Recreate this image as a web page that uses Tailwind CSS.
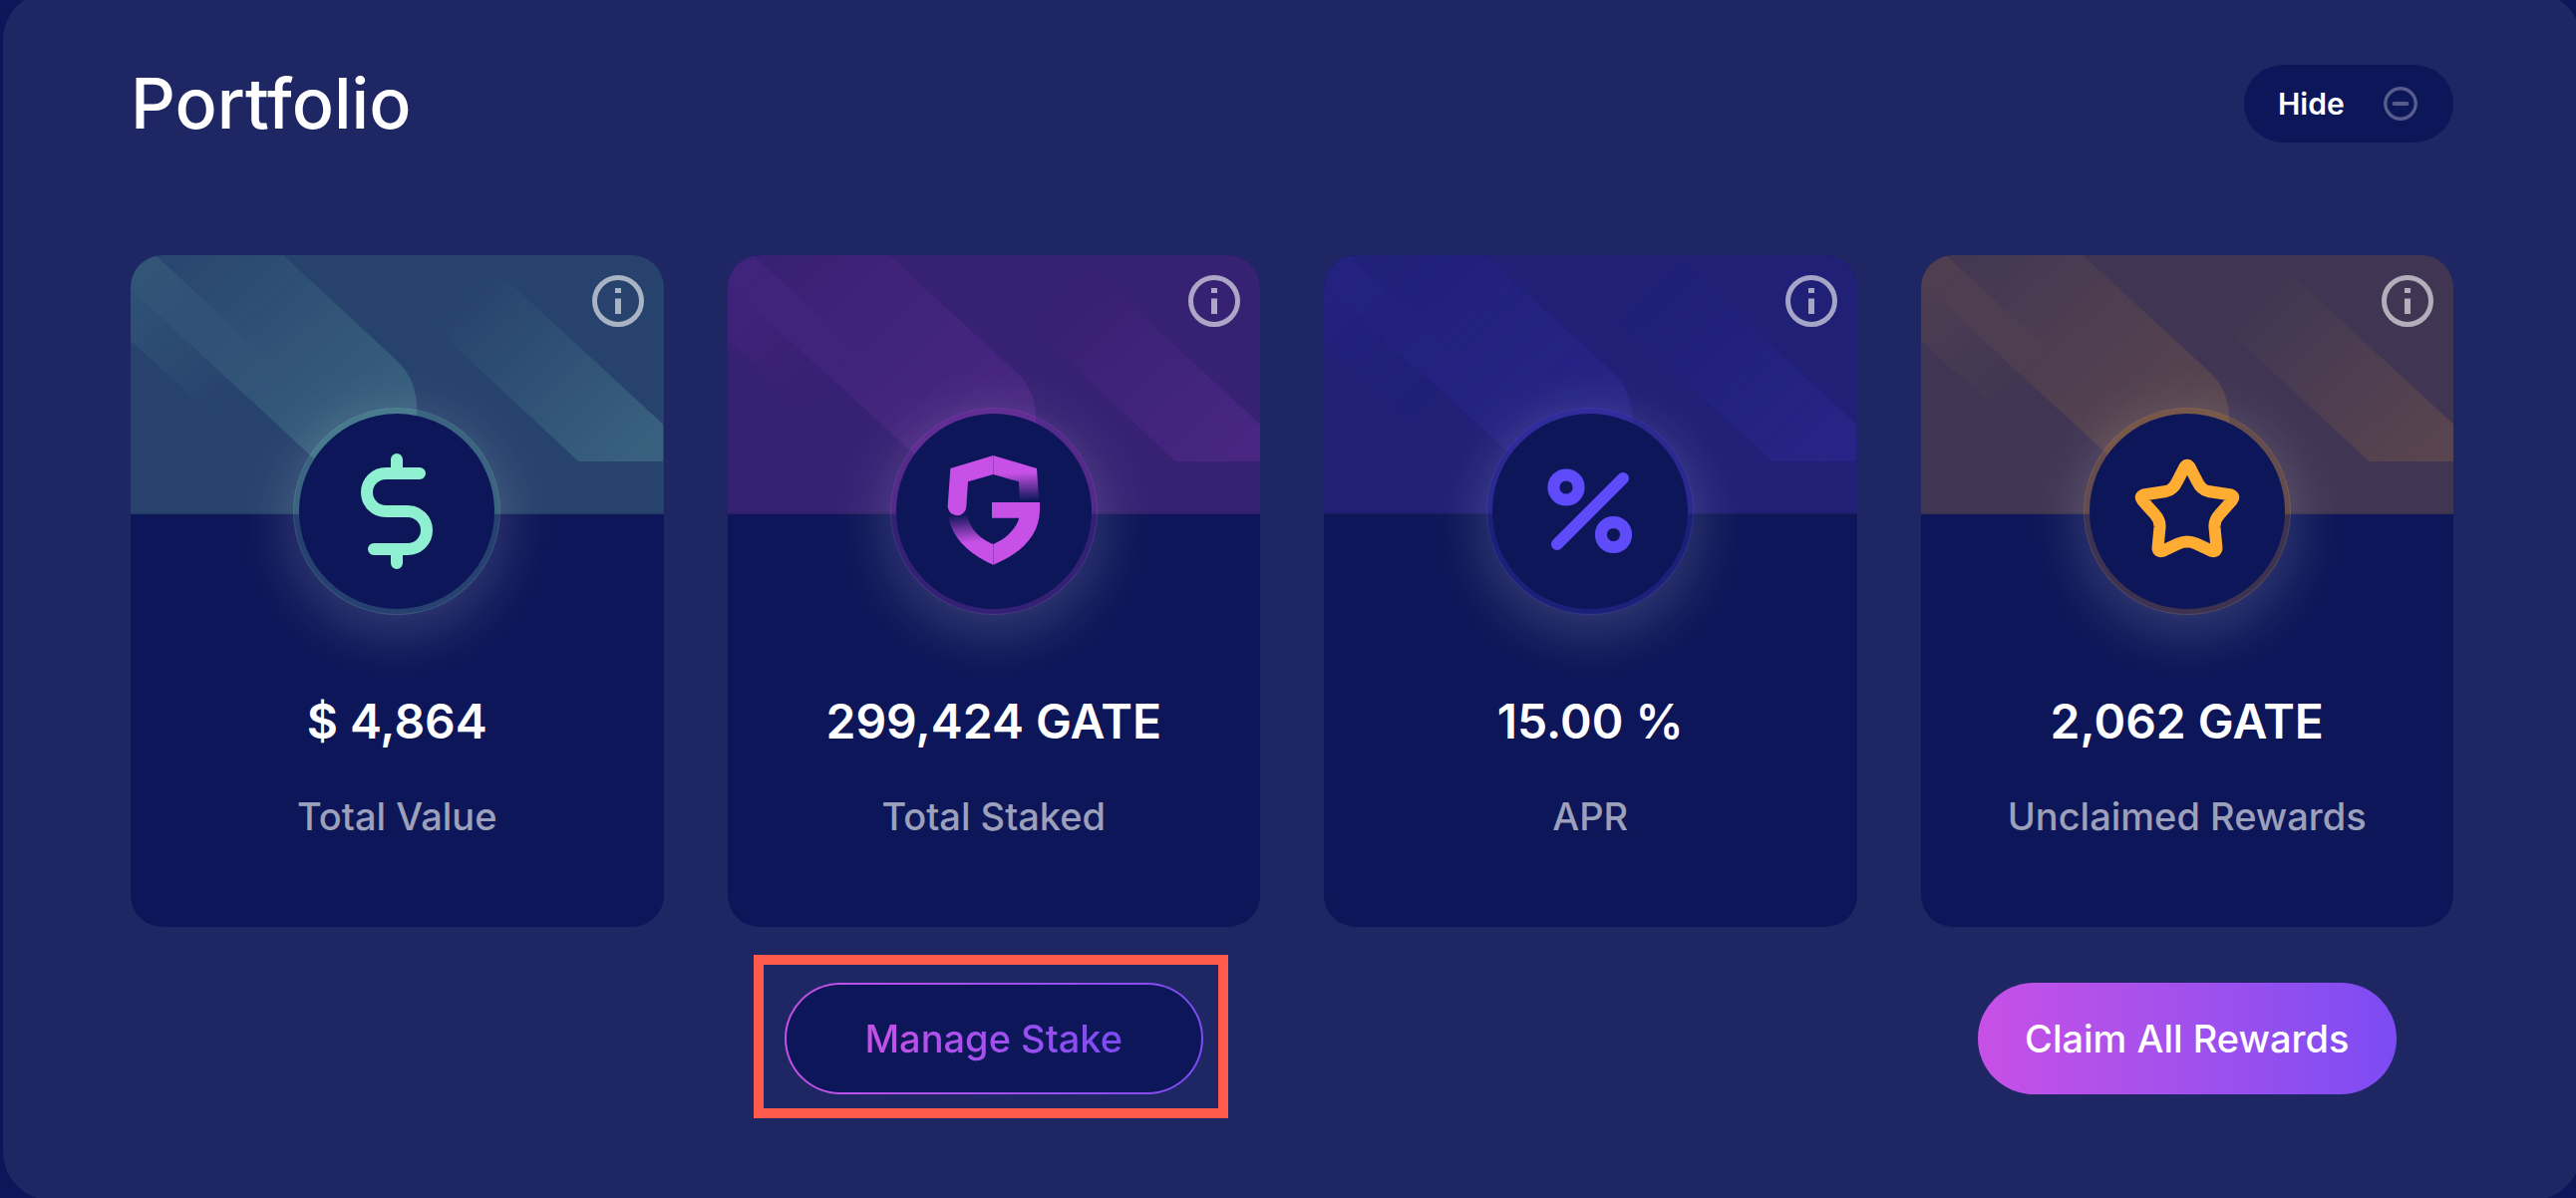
<!DOCTYPE html>
<html lang="en">
<head>
<meta charset="utf-8">
<meta name="viewport" content="width=device-width, initial-scale=1">
<title>Portfolio</title>
<script src="https://cdn.jsdelivr.net/npm/@tailwindcss/browser@4"></script>
</head>
<body class="bg-[#0d1658] font-['Inter','Noto_Sans',sans-serif] text-white">

<!-- Shared card artwork -->
<svg class="absolute size-0" aria-hidden="true">
  <defs>
    <linearGradient id="fadeWide" gradientUnits="userSpaceOnUse" x1="60" y1="-40" x2="270" y2="190">
      <stop offset="0" stop-color="#fff" stop-opacity=".1"/>
      <stop offset="1" stop-color="#fff"/>
    </linearGradient>
    <linearGradient id="fadeCorner" gradientUnits="userSpaceOnUse" x1="0" y1="20" x2="120" y2="145">
      <stop offset="0" stop-color="#fff" stop-opacity=".55"/>
      <stop offset="1" stop-color="#fff" stop-opacity="0"/>
    </linearGradient>
    <linearGradient id="fadeRight" gradientUnits="userSpaceOnUse" x1="325" y1="30" x2="500" y2="215">
      <stop offset="0" stop-color="#fff" stop-opacity="0"/>
      <stop offset="1" stop-color="#fff"/>
    </linearGradient>
    <mask id="maskWide" maskUnits="userSpaceOnUse" x="0" y="0" width="534" height="258"><rect width="534" height="258" fill="url(#fadeWide)"/></mask>
    <mask id="maskCorner" maskUnits="userSpaceOnUse" x="0" y="0" width="534" height="258"><rect width="534" height="258" fill="url(#fadeCorner)"/></mask>
    <mask id="maskRight" maskUnits="userSpaceOnUse" x="0" y="0" width="534" height="258"><rect width="534" height="258" fill="url(#fadeRight)"/></mask>
    <symbol id="bands" viewBox="0 0 534 258" preserveAspectRatio="none">
      <path fill="currentColor" mask="url(#maskWide)" d="M0 0H162L290 118Q309 136 309 166V210H198L0 28Z"/>
      <path fill="currentColor" mask="url(#maskCorner)" d="M0 0H25L160 126L120 195L0 86Z"/>
      <path fill="currentColor" mask="url(#maskRight)" d="M350 0L534 170V207H449L280 50Z"/>
    </symbol>
    <symbol id="bandsNarrow" viewBox="0 0 534 258" preserveAspectRatio="none">
      <path fill="currentColor" mask="url(#maskWide)" d="M0 0H153L267 106Q287 125 287 156V210H190L0 34Z"/>
      <path fill="currentColor" mask="url(#maskCorner)" d="M0 0H25L160 126L120 195L0 86Z"/>
      <path fill="currentColor" mask="url(#maskRight)" d="M350 0L534 170V207H449L280 50Z"/>
    </symbol>
    <symbol id="info" viewBox="0 0 52 52">
      <circle cx="26" cy="26" r="23.500" fill="none" stroke="currentColor" stroke-width="5"/>
      <path fill="currentColor" d="M23 13h6v5h-6zM23 23.500h6v15.500h-6z"/>
    </symbol>
  </defs>
</svg>

<div class="flow-root min-h-screen overflow-clip">
  <main class="-mt-2 -mr-[5px] -mb-0.5 ml-[3px] rounded-[48px] bg-[#1e2663] px-32 pt-[73px] pb-[106px]">
    <header class="flex items-center justify-between">
      <h1 class="text-[70px] leading-[78px] font-medium">Portfolio</h1>
      <button type="button" class="flex h-[78px] w-[210px] items-center justify-between rounded-full bg-[#0d1658] pr-9 pl-[34px] text-3xl font-semibold">
        Hide
        <svg class="size-[34px] text-[#575c8c]" viewBox="0 0 34 34" fill="none" stroke="currentColor" aria-hidden="true">
          <circle cx="17" cy="17" r="15.200" stroke-width="3.400"/>
          <path d="M10.500 17h13" stroke-width="3.800" stroke-linecap="round"/>
        </svg>
      </button>
    </header>

    <div class="mt-[113px] grid grid-cols-4 gap-16">

      <section class="flex flex-col items-center">
        <article class="relative w-full overflow-hidden rounded-[32px] bg-[#0d1658] text-center">
          <div class="h-[260px] border-b-2 border-[#233c63] bg-[#27426d] text-[#8eefd1]">
            <svg class="size-full opacity-18" aria-hidden="true"><use href="#bandsNarrow" width="100%" height="100%"/></svg>
          </div>
          <button type="button" aria-label="About total value" class="absolute top-5 right-5 text-white/60"><svg class="size-[52px]"><use href="#info"/></svg></button>
          <div class="absolute inset-x-0 top-[153px] flex justify-center">
            <div class="size-[208px] rounded-full border-6 border-[#8eefd1]/20 bg-[#0d1658] bg-clip-padding shadow-[0_14px_64px_rgba(255,255,255,0.2)]">
              <svg class="size-full" viewBox="6 6 196 196" fill="none" stroke="#8eefd1" stroke-width="12" stroke-linecap="round" aria-hidden="true">
                <path d="M127 66H93a19 19 0 0 0 0 38h22a19 19 0 0 1 0 38H81M104 52v14M104 142v14"/>
              </svg>
            </div>
          </div>
          <div class="pt-[178px] pb-[86px]">
            <p class="text-5xl leading-[60px] font-semibold">$ 4,864</p>
            <p class="mt-10 text-[38px] leading-[50px] font-medium text-white/60">Total Value</p>
          </div>
        </article>
      </section>

      <section class="flex flex-col items-center">
        <article class="relative w-full overflow-hidden rounded-[32px] bg-[#0d1658] text-center">
          <div class="h-[260px] border-b-2 border-[#2f1f66] bg-[#362173] text-[#c750e6]">
            <svg class="size-full opacity-13" aria-hidden="true"><use href="#bands" width="100%" height="100%"/></svg>
          </div>
          <button type="button" aria-label="About total staked" class="absolute top-5 right-5 text-white/60"><svg class="size-[52px]"><use href="#info"/></svg></button>
          <div class="absolute inset-x-0 top-[153px] flex justify-center">
            <div class="size-[208px] rounded-full border-6 border-[#c750e6]/20 bg-[#0d1658] bg-clip-padding shadow-[0_14px_64px_rgba(255,255,255,0.2)]">
              <svg class="size-full" viewBox="-3 -15 588 588" aria-hidden="true">
                <defs>
                  <linearGradient id="shieldRight" gradientUnits="userSpaceOnUse" x1="390" y1="163" x2="394" y2="248">
                    <stop offset="0" stop-color="#c750e6"/><stop offset="1" stop-color="#c750e6" stop-opacity="0"/>
                  </linearGradient>
                  <linearGradient id="shieldLeft" gradientUnits="userSpaceOnUse" x1="200" y1="374" x2="192" y2="288">
                    <stop offset="0" stop-color="#c750e6"/><stop offset="1" stop-color="#c750e6" stop-opacity="0"/>
                  </linearGradient>
                </defs>
                <path fill="url(#shieldLeft)" d="M289 440C210 405 158 350 153 284H211C213 325 245 360 289 378Z"/>
                <path fill="url(#shieldRight)" d="M289 111L420 150L427 250H369L366 190L289 168Z"/>
                <path fill="#c750e6" d="M289 111L160 150L152 263A28 28 0 0 0 208 265L213 190L289 168Z"/>
                <path fill="#c750e6" d="M285 252H429V275C428 350 375 405 289 440V378C330 362 358 330 367 299H285Z"/>
                <path stroke="#9a3fc0" stroke-width="2" d="M289.500 112V168M289.500 378V439"/>
              </svg>
            </div>
          </div>
          <div class="pt-[178px] pb-[86px]">
            <p class="text-5xl leading-[60px] font-semibold">299,424 GATE</p>
            <p class="mt-10 text-[38px] leading-[50px] font-medium text-white/60">Total Staked</p>
          </div>
        </article>
        <div class="relative mt-14">
          <button type="button" class="flex h-28 w-[420px] rounded-full bg-linear-to-r from-[#c750e6] to-[#7c4bf3] p-0.5">
            <span class="flex size-full items-center justify-center rounded-full bg-[#0d1658] text-[38px] leading-[50px] font-medium">
              <span class="bg-linear-to-r from-[#c750e6] to-[#7c4bf3] bg-clip-text text-transparent">Manage Stake</span>
            </span>
          </button>
          <div class="pointer-events-none absolute -top-7 -right-[25px] -bottom-6 -left-[31px] border-10 border-[#ff5a4b]"></div>
        </div>
      </section>

      <section class="flex flex-col items-center">
        <article class="relative w-full overflow-hidden rounded-[32px] bg-[#0d1658] text-center">
          <div class="h-[260px] border-b-2 border-[#1b1d68] bg-[#1f2076] text-[#5f4bfa]">
            <svg class="size-full opacity-13" aria-hidden="true"><use href="#bands" width="100%" height="100%"/></svg>
          </div>
          <button type="button" aria-label="About APR" class="absolute top-5 right-5 text-white/60"><svg class="size-[52px]"><use href="#info"/></svg></button>
          <div class="absolute inset-x-0 top-[153px] flex justify-center">
            <div class="size-[208px] rounded-full border-6 border-[#5f4bfa]/20 bg-[#0d1658] bg-clip-padding shadow-[0_14px_64px_rgba(255,255,255,0.2)]">
              <svg class="size-full" viewBox="6 6 196 196" fill="none" stroke="#5f4bfa" stroke-width="12" stroke-linecap="round" aria-hidden="true">
                <circle cx="80" cy="80" r="12.600"/><circle cx="127.500" cy="127.500" r="12.600"/><path d="M137 71L71 137"/>
              </svg>
            </div>
          </div>
          <div class="pt-[178px] pb-[86px]">
            <p class="text-5xl leading-[60px] font-semibold">15.00 %</p>
            <p class="mt-10 text-[38px] leading-[50px] font-medium text-white/60">APR</p>
          </div>
        </article>
      </section>

      <section class="flex flex-col items-center">
        <article class="relative w-full overflow-hidden rounded-[32px] bg-[#0d1658] text-center">
          <div class="h-[260px] border-b-2 border-[#39304c] bg-[#403654] text-[#ffac32]">
            <svg class="size-full opacity-13" aria-hidden="true"><use href="#bands" width="100%" height="100%"/></svg>
          </div>
          <button type="button" aria-label="About unclaimed rewards" class="absolute top-5 right-5 text-white/60"><svg class="size-[52px]"><use href="#info"/></svg></button>
          <div class="absolute inset-x-0 top-[153px] flex justify-center">
            <div class="size-[208px] rounded-full border-6 border-[#ffac32]/20 bg-[#0d1658] bg-clip-padding shadow-[0_14px_64px_rgba(255,255,255,0.2)]">
              <svg class="size-full" viewBox="6 6 196 196" fill="none" stroke="#ffac32" stroke-width="12" stroke-linejoin="round" aria-hidden="true">
                <path d="M101.500 59.500Q104 56 106.500 59.500L114 74Q118 82.500 125 84L148 87.500Q152 89 149 93L136.500 107Q131 113 131.500 120L133.500 141Q133 145 129 144L113 136.500Q104 132.500 95 136.500L79 144Q75 145 74.500 141L76.500 120Q77 113 71.500 107L59 93Q56 89 60 87.500L83 84Q90 82.500 94 74Z"/>
              </svg>
            </div>
          </div>
          <div class="pt-[178px] pb-[86px]">
            <p class="text-5xl leading-[60px] font-semibold">2,062 GATE</p>
            <p class="mt-10 text-[38px] leading-[50px] font-medium text-white/60">Unclaimed Rewards</p>
          </div>
        </article>
        <button type="button" class="mt-14 h-28 w-[420px] rounded-full bg-linear-to-r from-[#c750e6] to-[#7c4bf3] text-[38px] leading-[50px] font-medium">Claim All Rewards</button>
      </section>

    </div>
  </main>
</div>
</body>
</html>
